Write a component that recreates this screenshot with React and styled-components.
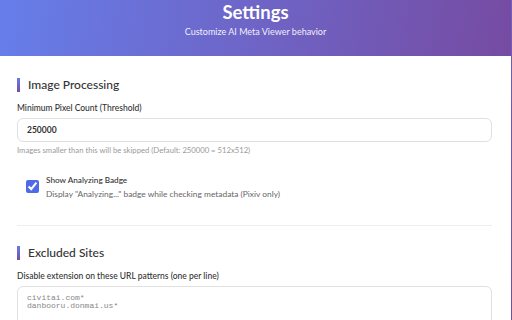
import React, { useState } from 'react';
import styled, { createGlobalStyle } from 'styled-components';

const GlobalStyle = createGlobalStyle`
  html, body {
    margin: 0;
    padding: 0;
  }
  body {
    min-height: 100vh;
    background: linear-gradient(135deg, #667eea 0%, #764ba2 100%);
    font-family: Lato, "Noto Sans", sans-serif;
    color: #333;
  }
`;

export default function App() {
  const [threshold, setThreshold] = useState('250000');
  const [showBadge, setShowBadge] = useState(true);
  const [excluded, setExcluded] = useState('civitai.com*\ndanbooru.donmai.us*');

  return (
    <>
      <GlobalStyle />
      <Container>
        <Header>
          <Title>Settings</Title>
          <Subtitle>Customize AI Meta Viewer behavior</Subtitle>
        </Header>
        <Content>
          <Section>
            <SectionTitle>Image Processing</SectionTitle>
            <Field>
              <Label htmlFor="threshold">Minimum Pixel Count (Threshold)</Label>
              <TextInput
                id="threshold"
                type="text"
                value={threshold}
                onChange={(e) => setThreshold(e.target.value)}
              />
              <Hint>Images smaller than this will be skipped (Default: 250000 = 512x512)</Hint>
            </Field>
            <CheckRow>
              <Checkbox
                type="checkbox"
                checked={showBadge}
                onChange={(e) => setShowBadge(e.target.checked)}
              />
              <CheckText>
                <CheckLabel>Show Analyzing Badge</CheckLabel>
                <CheckDesc>Display "Analyzing..." badge while checking metadata (Pixiv only)</CheckDesc>
              </CheckText>
            </CheckRow>
          </Section>
          <Section $last>
            <SectionTitle>Excluded Sites</SectionTitle>
            <Field>
              <Label htmlFor="excluded">Disable extension on these URL patterns (one per line)</Label>
              <TextArea
                id="excluded"
                rows={6}
                value={excluded}
                onChange={(e) => setExcluded(e.target.value)}
              />
            </Field>
          </Section>
        </Content>
      </Container>
    </>
  );
}

const Container = styled.div`
  width: 511px;
  height: 100vh;
  overflow: hidden;
  background: #fff;
`;

const Header = styled.header`
  height: 56px;
  box-sizing: border-box;
  background: linear-gradient(100deg, #667eea 0%, #764ba2 100%);
  color: #fff;
  text-align: center;
`;

const Title = styled.h1`
  margin: 0;
  font-size: 18.5px;
  font-weight: 700;
  line-height: 24px;
`;

const Subtitle = styled.p`
  margin: 2px 0 0;
  font-size: 9px;
  line-height: 12px;
  opacity: 0.9;
`;

const Content = styled.main`
  padding: 22px 19px 0 17px;
`;

const Section = styled.section`
  padding-bottom: ${(p) => (p.$last ? '0' : '25px')};
  margin-bottom: ${(p) => (p.$last ? '0' : '20px')};
  border-bottom: ${(p) => (p.$last ? 'none' : '1px solid #eee')};
`;

const SectionTitle = styled.h2`
  margin: 0 0 10px;
  padding-left: 8px;
  border-left: 3px solid #6f62cc;
  border-image: linear-gradient(180deg, #667eea, #764ba2) 1;
  font-size: 12px;
  font-weight: 500;
  line-height: 14px;
  color: #333;
`;

const Field = styled.div`
  display: flex;
  flex-direction: column;
`;

const Label = styled.label`
  font-size: 8.5px;
  font-weight: 500;
  line-height: 12px;
  margin-bottom: 4px;
  color: #333;
`;

const TextInput = styled.input`
  box-sizing: border-box;
  height: 24px;
  padding: 0 9px;
  border: 1px solid #e0e0e0;
  border-radius: 6px;
  font-family: inherit;
  font-size: 8.5px;
  font-weight: 700;
  color: #333;
  outline: none;
`;

const Hint = styled.span`
  margin-top: 2px;
  font-size: 7.7px;
  line-height: 12px;
  color: #999;
`;

const CheckRow = styled.label`
  display: flex;
  align-items: flex-start;
  gap: 7px;
  margin-top: 18px;
  padding-left: 9px;
`;

const Checkbox = styled.input`
  width: 13px;
  height: 13px;
  margin: 6px 0 0;
  accent-color: #4f6ae6;
`;

const CheckText = styled.div`
  display: flex;
  flex-direction: column;
  gap: 2px;
`;

const CheckLabel = styled.span`
  font-size: 8.2px;
  font-weight: 500;
  line-height: 12px;
  color: #333;
`;

const CheckDesc = styled.span`
  font-size: 8.4px;
  line-height: 12px;
  color: #666;
`;

const TextArea = styled.textarea`
  box-sizing: border-box;
  height: 80px;
  padding: 7px 9px;
  border: 1px solid #e0e0e0;
  border-radius: 6px;
  font-family: "Liberation Mono", monospace;
  font-size: 8px;
  line-height: 8px;
  color: #888;
  resize: vertical;
  outline: none;
`;
